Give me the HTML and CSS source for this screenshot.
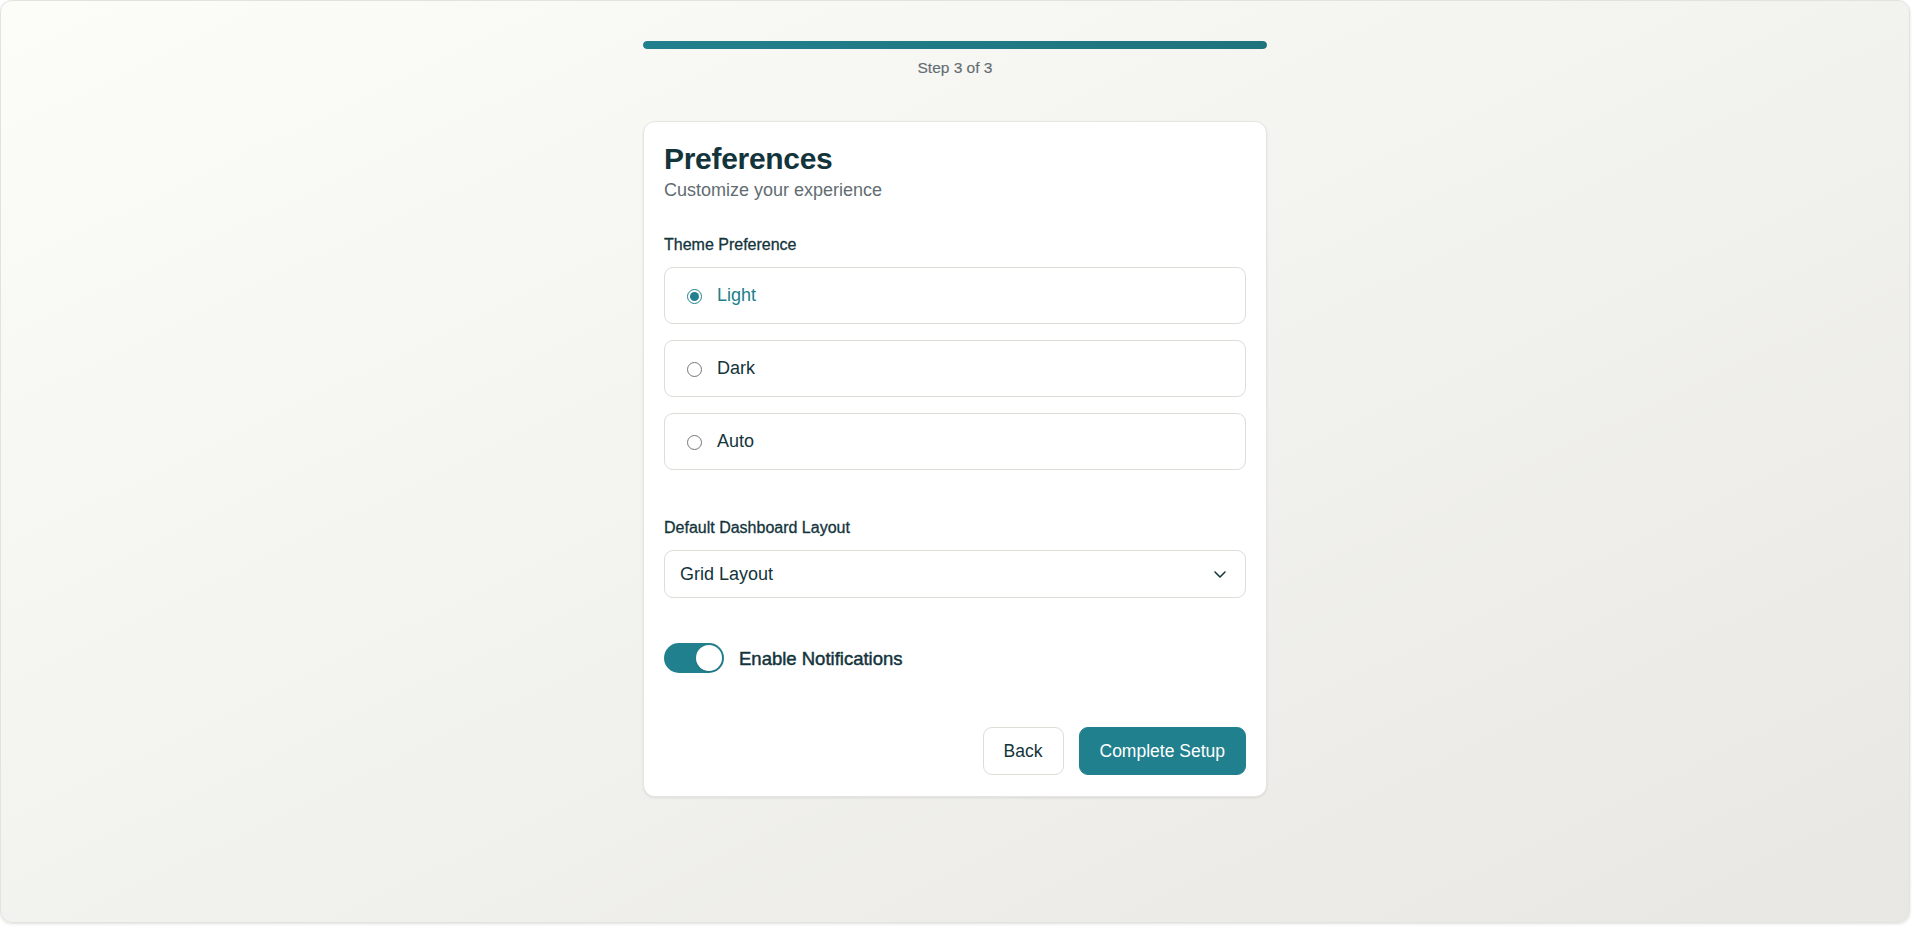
FILE: index.html
```html
<!DOCTYPE html>
<html lang="en">
<head>
<meta charset="utf-8">
<title>Preferences</title>
<link rel="stylesheet" href="styles.css">
</head>
<body>
<div class="app">
  <div class="wizard">
    <div class="progress">
      <div class="progress-track"><div class="progress-fill" style="width:100%"></div></div>
      <div class="progress-text">Step 3 of 3</div>
    </div>

    <div class="card">
      <h2 class="card-title">Preferences</h2>
      <p class="card-subtitle">Customize your experience</p>

      <div class="field">
        <div class="field-label">Theme Preference</div>
        <div class="options">
          <label class="option option--selected">
            <input type="radio" name="theme" checked>
            <span>Light</span>
          </label>
          <label class="option">
            <input type="radio" name="theme">
            <span>Dark</span>
          </label>
          <label class="option">
            <input type="radio" name="theme">
            <span>Auto</span>
          </label>
        </div>
      </div>

      <div class="field field--layout">
        <div class="field-label field-label--tight">Default Dashboard Layout</div>
        <div class="select-wrap">
          <select class="select">
            <option>Grid Layout</option>
            <option>List Layout</option>
          </select>
          <svg class="chevron" width="12" height="7" viewBox="0 0 12 7"><path d="M1 1l5 5 5-5" fill="none" stroke="#13343b" stroke-width="1.5" stroke-linecap="round" stroke-linejoin="round"/></svg>
        </div>
      </div>

      <div class="toggle-row">
        <span class="toggle"><span class="toggle-knob"></span></span>
        <span class="toggle-label">Enable Notifications</span>
      </div>

      <div class="actions">
        <button class="btn btn--secondary">Back</button>
        <button class="btn btn--primary">Complete Setup</button>
      </div>
    </div>
  </div>
</div>
</body>
</html>
```
FILE: styles.css
```css
* { box-sizing: border-box; }

html, body {
  margin: 0;
  padding: 0;
  height: 100%;
}

body {
  font-family: "Liberation Sans", Arial, sans-serif;
  color: #13343b;
  background: #ffffff;
}

.app {
  width: calc(100vw - 3px);
  height: calc(100vh - 4px);
  border: 1px solid #e2e2de;
  border-radius: 12px;
  background: linear-gradient(to bottom right, #fcfcf9 0%, #f3f3f0 45%, #e8e7e3 100%);
  box-shadow: 0 1px 3px rgba(0, 0, 0, 0.12);
  overflow: hidden;
}

.wizard {
  width: 624px;
  margin: 0 auto;
  padding-top: 40px;
}

.progress-track {
  height: 8px;
  border-radius: 4px;
  background: #e0dfda;
  overflow: hidden;
}

.progress-fill {
  height: 100%;
  border-radius: 4px;
  background: linear-gradient(90deg, #21808d, #1f737d);
}

.progress-text {
  margin-top: 8px;
  text-align: center;
  font-size: 15.5px;
  line-height: 22px;
  color: #626c71;
  -webkit-text-stroke: 0.15px #626c71;
}

.card {
  margin-top: 42px;
  background: #ffffff;
  border: 1px solid #e6e5e1;
  border-radius: 12px;
  padding: 22px 20px 21px;
  box-shadow: 0 1px 3px rgba(0, 0, 0, 0.06), 0 1px 2px rgba(0, 0, 0, 0.03);
}

.card-title {
  margin: 0;
  font-size: 30px;
  line-height: 30px;
  font-weight: 600;
  letter-spacing: -0.01em;
  color: #13343b;
}

.card-subtitle {
  margin: 3px 0 0;
  font-size: 18px;
  line-height: 27px;
  color: #626c71;
}

.field {
  margin-top: 29px;
}

.field-label {
  font-size: 16px;
  line-height: 24px;
  color: #13343b;
  margin-bottom: 10px;
  -webkit-text-stroke: 0.3px #13343b;
}

.field-label--tight {
  margin-bottom: 10px;
}

.options {
  display: flex;
  flex-direction: column;
  gap: 16px;
}

.option {
  display: flex;
  align-items: center;
  gap: 15px;
  padding: 14px 16px 14px 22px;
  border: 1px solid #dedcd7;
  border-radius: 9px;
  font-size: 18px;
  line-height: 27px;
  color: #13343b;
  cursor: pointer;
}

.option input {
  margin: 2px 0 0;
  width: 15px;
  height: 15px;
  accent-color: #21808d;
}

.option--selected {
  color: #21808d;
}

.field--layout {
  margin-top: 46px;
}

.select-wrap {
  position: relative;
}

.select {
  display: block;
  width: 100%;
  height: 48px;
  appearance: none;
  -webkit-appearance: none;
  border: 1px solid #dedcd7;
  border-radius: 9px;
  background: #ffffff;
  padding: 0 40px 0 15px;
  font-family: "Liberation Sans", Arial, sans-serif;
  font-size: 18px;
  color: #13343b;
}

.chevron {
  position: absolute;
  right: 20px;
  top: 21px;
}

.toggle-row {
  display: flex;
  align-items: center;
  gap: 15px;
  margin-top: 45px;
}

.toggle {
  position: relative;
  width: 60px;
  height: 30px;
  border-radius: 15px;
  background: #21808d;
  flex: none;
}

.toggle-knob {
  position: absolute;
  top: 2px;
  left: 32px;
  width: 26px;
  height: 26px;
  border-radius: 50%;
  background: #ffffff;
  box-shadow: 0 1px 2px rgba(0, 0, 0, 0.15);
}

.toggle-label {
  font-size: 18.5px;
  line-height: 27px;
  font-weight: 400;
  color: #13343b;
  -webkit-text-stroke: 0.45px #13343b;
}

.actions {
  display: flex;
  justify-content: flex-end;
  gap: 15px;
  margin-top: 54px;
}

.btn {
  font-family: "Liberation Sans", Arial, sans-serif;
  font-size: 17.5px;
  line-height: 26px;
  padding: 10px 20px;
  border-radius: 9px;
  cursor: pointer;
}

.btn--secondary {
  background: #ffffff;
  border: 1px solid #dedcd7;
  color: #13343b;
}

.btn--primary {
  background: #21808d;
  border: 1px solid #21808d;
  color: #ffffff;
}
```
